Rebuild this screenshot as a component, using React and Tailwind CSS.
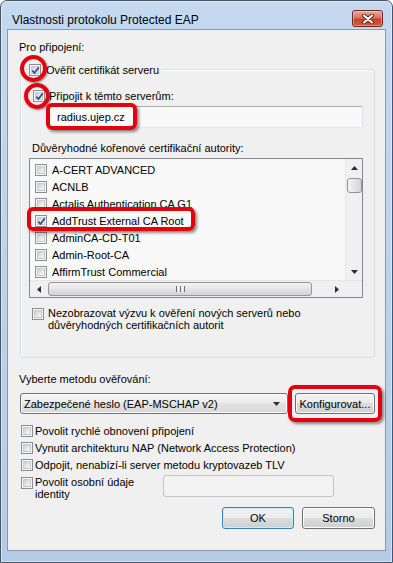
import React from "react";

function Cb({ checked = false, className = "" }) {
  return (
    <span className={`relative inline-flex shrink-0 w-[12px] h-[12px] border border-[#8e8f8f] bg-[#f6f6f6] p-[1px] ${className}`}>
      <span className="flex-1 bg-gradient-to-br from-[#c9ccd1] via-[#e4e5e7] to-[#f8f8f8] border border-[#b3b6bb]/60" />
      {checked && (
        <svg className="absolute left-[1px] top-[1px]" width="9" height="9" viewBox="0 0 9 9">
          <path d="M1.3 4.6 L3.5 7 L7.8 1.2" fill="none" stroke="#2c4a8e" strokeWidth="1.7" strokeLinejoin="round" />
        </svg>
      )}
    </span>
  );
}

function Tri({ dir }) {
  if (dir === "up")
    return (
      <svg width="7" height="4" viewBox="0 0 7 4"><path d="M0 4 L3.5 0 L7 4 Z" fill="#2f2f2f" /></svg>
    );
  if (dir === "down")
    return (
      <svg width="7" height="4" viewBox="0 0 7 4"><path d="M0 0 L7 0 L3.5 4 Z" fill="#2f2f2f" /></svg>
    );
  if (dir === "left")
    return (
      <svg width="4" height="7" viewBox="0 0 4 7"><path d="M4 0 L4 7 L0 3.5 Z" fill="#2f2f2f" /></svg>
    );
  return (
    <svg width="4" height="7" viewBox="0 0 4 7"><path d="M0 0 L4 3.5 L0 7 Z" fill="#2f2f2f" /></svg>
  );
}

const rows = [
  ["A-CERT ADVANCED", false],
  ["ACNLB", false],
  ["Actalis Authentication CA G1", false],
  ["AddTrust External CA Root", true],
  ["AdminCA-CD-T01", false],
  ["Admin-Root-CA", false],
  ["AffirmTrust Commercial", false],
];

export default function App() {
  return (
    <div className="relative w-[393px] h-[563px] bg-white font-['Liberation_Sans',Arial,sans-serif] text-[11px] leading-[14px] text-black">
      <div className="w-full h-full flex flex-col border border-[#44566b] rounded-t-[7px] bg-gradient-to-b from-[#c4d9f0] via-[#bcd3ec] to-[#b4cbe6] shadow-[inset_0_0_0_1px_rgba(255,255,255,0.45)]">
        {/* title bar */}
        <div className="h-[28px] shrink-0 flex items-start justify-between pl-[11px] pr-[9px]">
          <span className="mt-[11px] text-[12px] leading-[16px] text-black">Vlastnosti protokolu Protected EAP</span>
          <div className="mt-[9px] w-[31px] h-[17px] rounded-[3px] border border-[#6b2620] bg-[linear-gradient(#eaa899_0%,#d9745f_45%,#c7432b_55%,#cf5a3f_100%)] shadow-[inset_0_0_0_1px_rgba(255,255,255,0.35)] flex items-center justify-center">
            <svg width="14" height="10" viewBox="0 0 14 10">
              <path d="M3 1.5 L11 8.5 M11 1.5 L3 8.5" stroke="#5a2219" strokeWidth="3.8" strokeLinecap="round" />
              <path d="M3 1.5 L11 8.5 M11 1.5 L3 8.5" stroke="#ffffff" strokeWidth="2.1" strokeLinecap="round" />
            </svg>
          </div>
        </div>

        {/* client */}
        <div className="mx-[6px] h-[522px] shrink-0 border border-[#8499b3] bg-[#f0f0f0] flex flex-col pl-[11px] pr-[10px]">
          <div className="mt-[10px] h-[14px]">Pro připojení:</div>

          <fieldset className="mt-[9px] ml-[1px] border border-[#d5dfe5] rounded-[3px] pb-[26px] min-w-0 shadow-[inset_1px_1px_0_#ffffff]">
            <legend className="ml-[8px] pr-[3px] h-[13px] flex items-center gap-[5px]">
              <Cb checked />
              <span>Ověřit certifikát serveru</span>
            </legend>

            <div className="mt-[13px] ml-[12px] h-[14px] flex items-center gap-[4px]">
              <Cb checked />
              <span>Připojit k těmto serverům:</span>
            </div>

            <div className="mt-[3px] ml-[27px] mr-[11px] h-[22px] rounded-[2px] border border-[#dbdfe6] border-t-[#abadb3] border-b-[#e3e9ef] bg-[#f9f9f9] pl-[8px] flex items-center">
              radius.ujep.cz
            </div>

            <div className="mt-[13px] ml-[11px] h-[14px]">Důvěryhodné kořenové certifikační autority:</div>

            <div className="mt-[3px] ml-[8px] mr-[11px] h-[140px] border border-[#828790] bg-[#f9f9f9] flex flex-col">
              <div className="flex flex-1 min-h-0">
                <div className="flex-1 overflow-hidden pt-[2px]">
                  {rows.map(([t, c]) => (
                    <div key={t} className="h-[17px] flex items-center pl-[5px] gap-[5px] whitespace-nowrap">
                      <Cb checked={c} />
                      <span>{t}</span>
                    </div>
                  ))}
                </div>
                <div className="w-[17px] flex flex-col items-center bg-[#f0f0f0] border-l border-[#e6e6e6]">
                  <div className="h-[17px] w-full flex items-center justify-center"><Tri dir="up" /></div>
                  <div className="mt-[2px] w-[15px] h-[15px] rounded-[3px] border border-[#959595] bg-gradient-to-r from-[#f4f4f4] to-[#d4d4d4]" />
                  <div className="flex-1" />
                  <div className="h-[17px] w-full flex items-center justify-center"><Tri dir="down" /></div>
                </div>
              </div>
              <div className="h-[17px] flex bg-[#f0f0f0] border-t border-[#e6e6e6]">
                <div className="w-[17px] flex items-center justify-center"><Tri dir="left" /></div>
                <div className="ml-[1px] my-[1px] w-[264px] rounded-[3px] border border-[#959595] bg-gradient-to-b from-[#f4f4f4] to-[#d4d4d4] flex items-center justify-center gap-[1px]">
                  <span className="w-[1px] h-[6px] bg-[#6f6f6f]" />
                  <span className="w-[1px] h-[6px] bg-[#ffffff]" />
                  <span className="w-[1px] h-[6px] bg-[#6f6f6f]" />
                  <span className="w-[1px] h-[6px] bg-[#ffffff]" />
                  <span className="w-[1px] h-[6px] bg-[#6f6f6f]" />
                </div>
                <div className="flex-1" />
                <div className="w-[17px] flex items-center justify-center"><Tri dir="right" /></div>
                <div className="w-[17px] bg-[#f0f0f0]" />
              </div>
            </div>

            <div className="mt-[9px] ml-[11px] flex items-start gap-[4px] leading-[12px]">
              <Cb className="mt-[1px]" />
              <span>
                Nezobrazovat výzvu k ověření nových serverů nebo
                <br />
                důvěryhodných certifikačních autorit
              </span>
            </div>
          </fieldset>

          <div className="mt-[14px] h-[14px]">Vyberte metodu ověřování:</div>

          <div className="mt-[7px] flex items-start justify-between">
            <div className="ml-[1px] w-[268px] h-[21px] rounded-[3px] border border-[#707070] bg-[linear-gradient(#f4f4f4_0%,#ececec_50%,#e2e2e2_50%,#d8d8d8_100%)] shadow-[inset_0_0_0_1px_#fbfbfb] flex items-center justify-between pl-[3px] pr-[7px]">
              <span>Zabezpečené heslo (EAP-MSCHAP v2)</span>
              <Tri dir="down" />
            </div>
            <div className="w-[80px] h-[21px] rounded-[3px] border border-[#707070] bg-[linear-gradient(#f2f2f2_0%,#ebebeb_50%,#dddddd_50%,#cfcfcf_100%)] shadow-[inset_0_0_0_1px_#fcfcfc] flex items-center justify-center">
              Konfigurovat...
            </div>
          </div>

          <div className="mt-[8px] flex flex-col">
            <div className="h-[17px] ml-[2px] flex items-center gap-[2px]"><Cb /><span>Povolit rychlé obnovení připojení</span></div>
            <div className="h-[17px] ml-[2px] flex items-center gap-[2px]"><Cb /><span>Vynutit architekturu NAP (Network Access Protection)</span></div>
            <div className="h-[17px] ml-[2px] flex items-center gap-[2px]"><Cb /><span>Odpojit, nenabízí-li server metodu kryptovazeb TLV</span></div>
          </div>

          <div className="mt-[2px] flex items-start">
            <div className="ml-[2px] flex items-start gap-[2px] leading-[12px]">
              <Cb className="mt-[2px]" />
              <span className="mt-[1px]">
                Povolit osobní údaje
                <br />
                identity
              </span>
            </div>
            <div className="ml-auto mr-[41px] w-[171px] h-[22px] rounded-[3px] border border-[#c4c4c4] bg-[#f3f3f3]" />
          </div>

          <div className="mt-[7px] flex justify-end gap-[8px]">
            <div className="w-[72px] h-[22px] rounded-[3px] border border-[#3c7fb1] bg-[linear-gradient(#f2f2f2_0%,#ebebeb_50%,#dddddd_50%,#cfcfcf_100%)] shadow-[inset_0_0_0_1px_#c8ecfb] flex items-center justify-center">
              OK
            </div>
            <div className="w-[73px] h-[22px] rounded-[3px] border border-[#707070] bg-[linear-gradient(#f2f2f2_0%,#ebebeb_50%,#dddddd_50%,#cfcfcf_100%)] shadow-[inset_0_0_0_1px_#fcfcfc] flex items-center justify-center">
              Storno
            </div>
          </div>
        </div>
      </div>

      {/* red annotations */}
      <div className="absolute left-[20px] top-[55px] w-[27px] h-[27px] rounded-full border-[4px] border-[#e5000e] shadow-[1px_1px_2px_rgba(0,0,0,0.45)]" />
      <div className="absolute left-[24px] top-[83px] w-[26px] h-[26px] rounded-full border-[4px] border-[#e5000e] shadow-[1px_1px_2px_rgba(0,0,0,0.45)]" />
      <div className="absolute left-[46px] top-[103px] w-[91px] h-[27px] rounded-[6px] border-[4px] border-[#e5000e] shadow-[2px_2px_3px_rgba(0,0,0,0.45)]" />
      <div className="absolute left-[27px] top-[207px] w-[168px] h-[24px] rounded-[6px] border-[4px] border-[#e5000e] shadow-[2px_2px_3px_rgba(0,0,0,0.45)]" />
      <div className="absolute left-[288px] top-[385px] w-[94px] h-[37px] rounded-[7px] border-[4px] border-[#e5000e] shadow-[2px_2px_3px_rgba(0,0,0,0.45)]" />
    </div>
  );
}
